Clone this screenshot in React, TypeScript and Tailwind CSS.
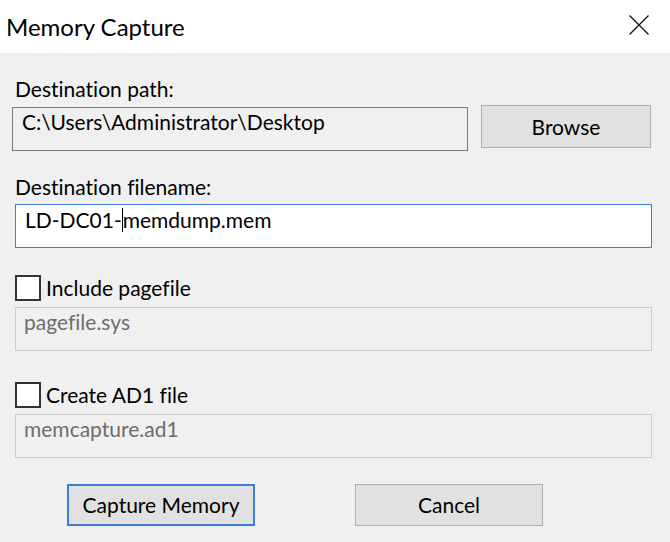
const font = { fontFamily: "Lato, 'Noto Sans', sans-serif" };

const CheckRow = ({ label }: { label: string }) => (
  <label className="flex items-center gap-[5px] h-[26px]">
    <span className="w-[26px] h-[26px] border-2 border-[#333333] bg-white shrink-0" />
    <span className="text-[21px] leading-[24px] text-black">{label}</span>
  </label>
);

const ReadonlyBox = ({ value }: { value: string }) => (
  <div className="mt-[6px] ml-[15px] mr-[18px] h-[44px] border border-[#cccccc] bg-[#f0f0f0] pl-[8px] pt-[2px] text-[21px] leading-[24px] text-[#6d6d6d]">
    {value}
  </div>
);

export default function App() {
  return (
    <div
      className="w-[670px] h-[542px] bg-[#f0f0f0] overflow-hidden [font-variant-ligatures:none]"
      style={font}
    >
      <div className="h-[53px] bg-white flex items-center justify-between pl-[6px] pr-[21px]">
        <span className="text-[24px] leading-[28px] text-black">Memory Capture</span>
        <svg width="20" height="20" viewBox="0 0 20 20" className="mb-[3px]">
          <path d="M0.5 0.5 L19.5 19.5 M19.5 0.5 L0.5 19.5" stroke="#111" strokeWidth="1.3" />
        </svg>
      </div>

      <div className="pt-[24px] pl-[15px] text-[21px] leading-[24px] text-black">Destination path:</div>
      <div className="mt-[4px] flex items-start pl-[12px] pr-[19px]">
        <div className="mt-[2px] w-[456px] h-[44px] border border-[#7a7a7a] pl-[9px] pt-[2px] text-[21px] leading-[24px] text-black">
          C:\Users\Administrator\Desktop
        </div>
        <button className="ml-auto w-[170px] h-[43px] bg-[#e1e1e1] border border-[#adadad] text-[21px] leading-[24px] text-black">
          Browse
        </button>
      </div>

      <div className="mt-[24px] pl-[15px] text-[21px] leading-[24px] text-black">Destination filename:</div>
      <div className="mt-[5px] ml-[15px] mr-[18px] h-[44px] bg-white border border-[#3b7dd8] pl-[9px] pt-[3px] text-[21px] leading-[24px] text-black flex items-start">
        <span>LD-DC01-</span>
        <span className="w-[1px] h-[24px] bg-black" />
        <span>memdump.mem</span>
      </div>

      <div className="mt-[27px] pl-[15px]">
        <CheckRow label="Include pagefile" />
      </div>
      <ReadonlyBox value="pagefile.sys" />

      <div className="mt-[31px] pl-[15px]">
        <CheckRow label="Create AD1 file" />
      </div>
      <ReadonlyBox value="memcapture.ad1" />

      <div className="mt-[26px] flex pl-[67px] gap-[100px]">
        <button className="w-[188px] h-[42px] bg-[#e1e1e1] border-2 border-[#3b7dd8] text-[21px] leading-[24px] text-black">
          Capture Memory
        </button>
        <button className="w-[188px] h-[42px] bg-[#e1e1e1] border border-[#adadad] text-[21px] leading-[24px] text-black">
          Cancel
        </button>
      </div>
    </div>
  );
}
